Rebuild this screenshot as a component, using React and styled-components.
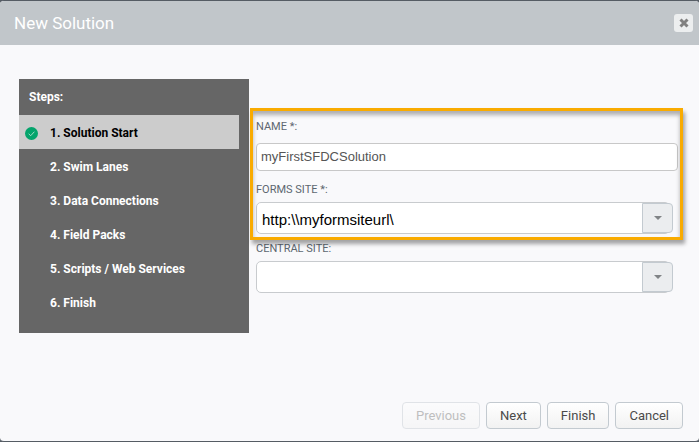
import React, { useState } from 'react';
import styled, { createGlobalStyle } from 'styled-components';

const GlobalStyle = createGlobalStyle`
  * {
    box-sizing: border-box;
  }
  body {
    margin: 0;
    background-color: #555c64;
    font-family: Roboto, Arial, sans-serif;
  }
  button, input, select {
    font-family: inherit;
    margin: 0;
  }
`;

const Dialog = styled.div`
  display: flex;
  flex-direction: column;
  min-height: 100vh;
  border-top: 1px solid #555c64;
  border-bottom: 1px solid #555c64;
  border-radius: 4px;
  background-color: #f9f9fb;
  overflow: hidden;
`;

const DialogHeader = styled.header`
  display: flex;
  align-items: center;
  justify-content: space-between;
  height: 44px;
  padding: 0 6px 0 14px;
  background-color: #c1c6ca;
`;

const Title = styled.h1`
  margin: 0;
  font-size: 17px;
  font-weight: 400;
  line-height: 24px;
  color: #fff;
`;

const CloseButton = styled.button`
  display: flex;
  align-items: center;
  justify-content: center;
  width: 19px;
  height: 18px;
  padding: 0;
  border: 0;
  border-radius: 3px;
  background-color: #eceeef;
`;

const DialogBody = styled.div`
  display: flex;
  flex: 1;
  align-items: flex-start;
  padding: 34px 16px 0 19px;
`;

const Sidebar = styled.nav`
  flex: 0 0 230px;
  padding-bottom: 14px;
  background-color: #666;
`;

const SidebarTitle = styled.h2`
  margin: 0;
  padding-left: 10px;
  font-size: 12px;
  font-weight: 700;
  line-height: 36px;
  color: #fff;
`;

const StepList = styled.ol`
  margin: 0;
  padding: 0 10px 0 0;
  list-style: none;
`;

const Step = styled.li`
  display: flex;
  align-items: center;
  height: 34px;
  padding: 2px 0 0 6px;
  font-size: 12px;
  font-weight: 700;
  color: ${({ $active }) => ($active ? '#000' : '#fff')};
  background-color: ${({ $active }) => ($active ? '#ccc' : 'transparent')};
`;

const StepIcon = styled.span`
  display: flex;
  flex: 0 0 25px;
`;

const Form = styled.form`
  flex: 1;
  min-width: 0;
  padding: 39px 0 0 7px;
`;

const RequiredFields = styled.div`
  position: relative;
  margin-bottom: 6px;
`;

const Highlight = styled.div`
  position: absolute;
  inset: -10px 0 -6px -6px;
  border: 3px solid #f9ab00;
  box-shadow: 2px 4px 4px rgba(0, 0, 0, 0.35), inset 0 4px 4px rgba(0, 0, 0, 0.3);
  pointer-events: none;
`;

const Label = styled.label`
  display: block;
  font-size: 11px;
  line-height: 18px;
  color: #5d6770;
`;

const TextInput = styled.input`
  display: block;
  width: calc(100% - 5px);
  height: 28px;
  && {
    margin: 7px 0 10px;
    font-family: 'Liberation Sans', Arial, sans-serif;
  }
  padding: 0 4px 2px;
  border: 1px solid #c8c8c8;
  border-radius: 4px;
  background-color: #fff;
  font-size: 13px;
  color: #555;
`;

const SelectBox = styled.div`
  display: grid;
  align-items: center;
  margin: 3px 10px 0 0;
`;

const Select = styled.select`
  grid-area: 1 / 1;
  width: calc(100% - 3px);
  height: 32px;
  padding: 3px 36px 0 5px;
  border: 1px solid #c8cbce;
  border-radius: 5px;
  background-color: #fff;
  appearance: none;
  && {
    font-family: 'Liberation Sans', Arial, sans-serif;
  }
  font-size: 15px;
  color: #000;
`;

const SelectArrow = styled.span`
  display: flex;
  grid-area: 1 / 1;
  justify-self: end;
  align-items: center;
  justify-content: center;
  width: 31px;
  height: 30px;
  border: 1px solid #c3cad0;
  border-radius: 0 4px 4px 0;
  background-color: #ebedef;
  pointer-events: none;
`;

const DialogFooter = styled.footer`
  display: flex;
  justify-content: flex-end;
  gap: 6px;
  padding: 0 16px 12px;
`;

const Button = styled.button`
  height: 27px;
  padding: 0 13px;
  border: 1px solid #c3cad0;
  border-radius: 4px;
  background: linear-gradient(#fff, #f2f2f2);
  font-size: 13px;
  color: #4a4a4a;
  &:disabled {
    opacity: 0.45;
    color: #777;
  }
`;

const steps = [
  'Solution Start',
  'Swim Lanes',
  'Data Connections',
  'Field Packs',
  'Scripts / Web Services',
  'Finish',
];

const CheckIcon = () => (
  <svg width="13" height="13" viewBox="0 0 13 13" aria-hidden="true">
    <circle cx="6.5" cy="6.5" r="6.5" fill="#04a46c" />
    <path d="M3.7 6.8l2 1.9 3.7-4" fill="none" stroke="#b5e3d1" strokeWidth="0.9" />
  </svg>
);

const CloseIcon = () => (
  <svg width="10" height="10" viewBox="0 0 10 10" aria-hidden="true">
    <path d="M1.5 1.5l7 7M8.5 1.5l-7 7" stroke="#808080" strokeWidth="3" />
  </svg>
);

const ArrowIcon = () => (
  <svg width="8" height="4" viewBox="0 0 8 4" aria-hidden="true">
    <path d="M0 0h8L4 4z" fill="#808386" />
  </svg>
);

const SiteSelect = ({ id, children }) => (
  <SelectBox>
    <Select id={id}>{children}</Select>
    <SelectArrow>
      <ArrowIcon />
    </SelectArrow>
  </SelectBox>
);

export default function App() {
  const [name, setName] = useState('myFirstSFDCSolution');

  return (
    <>
      <GlobalStyle />
      <Dialog role="dialog" aria-labelledby="dialog-title">
        <DialogHeader>
          <Title id="dialog-title">New Solution</Title>
          <CloseButton type="button" aria-label="Close">
            <CloseIcon />
          </CloseButton>
        </DialogHeader>
        <DialogBody>
          <Sidebar>
            <SidebarTitle>Steps:</SidebarTitle>
            <StepList>
              {steps.map((step, i) => (
                <Step key={step} $active={i === 0}>
                  <StepIcon>{i === 0 && <CheckIcon />}</StepIcon>
                  {`${i + 1}. ${step}`}
                </Step>
              ))}
            </StepList>
          </Sidebar>
          <Form id="solution-form">
            <RequiredFields>
              <Label htmlFor="name">NAME *:</Label>
              <TextInput
                id="name"
                type="text"
                value={name}
                onChange={(e) => setName(e.target.value)}
              />
              <Label htmlFor="forms-site">FORMS SITE *:</Label>
              <SiteSelect id="forms-site">
                <option>{'http:\\\\myformsiteurl\\'}</option>
              </SiteSelect>
              <Highlight />
            </RequiredFields>
            <Label htmlFor="central-site">CENTRAL SITE:</Label>
            <SiteSelect id="central-site">
              <option aria-label="None" />
            </SiteSelect>
          </Form>
        </DialogBody>
        <DialogFooter>
          <Button type="button" disabled>
            Previous
          </Button>
          <Button type="button">Next</Button>
          <Button type="button">Finish</Button>
          <Button type="button">Cancel</Button>
        </DialogFooter>
      </Dialog>
    </>
  );
}
